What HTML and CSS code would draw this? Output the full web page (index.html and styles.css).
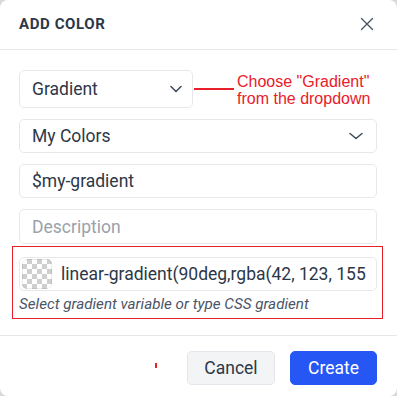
FILE: index.html
```html
<!DOCTYPE html>
<html>
<head>
<meta charset="utf-8">
<link rel="stylesheet" href="styles.css">
</head>
<body>
<div class="dialog">
  <div class="header">
    <div class="title">ADD COLOR</div>
    <svg class="close" width="14" height="14" viewBox="0 0 14 14"><path d="M1.5 1.5 L12.5 12.5 M12.5 1.5 L1.5 12.5" stroke="#4a5568" stroke-width="1.4" fill="none" stroke-linecap="round"/></svg>
  </div>
  <div class="body">
    <div class="row-first">
      <div class="select small">
        <span>Gradient</span>
        <svg class="chev" width="12" height="8" viewBox="0 0 12 8"><path d="M1 1.5 L6 6.5 L11 1.5" stroke="#3d4a5c" stroke-width="1.5" fill="none" stroke-linecap="round" stroke-linejoin="round"/></svg>
      </div>
      <div class="annot-line"></div>
      <div class="annot-text">Choose "Gradient"<br>from the dropdown</div>
    </div>
    <div class="select">
      <span>My Colors</span>
      <svg class="chev" width="14" height="8" viewBox="0 0 14 8"><path d="M1 1.5 L7 6.5 L13 1.5" stroke="#3d4a5c" stroke-width="1.5" fill="none" stroke-linecap="round" stroke-linejoin="round"/></svg>
    </div>
    <div class="input">$my-gradient</div>
    <div class="input placeholder">Description</div>
    <div class="grad-group">
      <div class="annot-box"></div>
      <div class="input grad">
        <span class="swatch"></span>
        <span class="grad-text">linear-gradient(90deg,rgba(42, 123, 155</span>
      </div>
      <div class="hint">Select gradient variable or type CSS gradient</div>
    </div>
  </div>
  <div class="footer">
    <span class="red-mark"></span>
    <button class="btn cancel">Cancel</button>
    <button class="btn create">Create</button>
  </div>
</div>
</body>
</html>
```

FILE: styles.css
```css
* { box-sizing: border-box; }
html, body { margin: 0; padding: 0; }
body {
  background: #d9d9d9;
  width: 397px;
  height: 396px;
  font-family: Roboto, "Noto Sans", sans-serif;
  color: #2d3748;
}
.dialog {
  width: 397px;
  height: 396px;
  background: #fff;
  border-radius: 8px;
  overflow: hidden;
  display: flex;
  flex-direction: column;
}
.header {
  height: 50px;
  border-bottom: 1px solid #e5e7eb;
  display: flex;
  align-items: center;
  justify-content: space-between;
  padding: 0 23px 2px 19px;
}
.title {
  font-size: 15px;
  font-weight: 700;
  letter-spacing: 0.6px;
  color: #2d3748;
}
.close { display: block; }
.body {
  padding: 20px 20px 0 19px;
  display: flex;
  flex-direction: column;
  gap: 11px;
  height: 285px;
}
.row-first {
  display: flex;
  align-items: center;
  position: relative;
}
.select, .input {
  height: 34px;
  border: 1px solid #e6e8eb;
  border-radius: 5px;
  display: flex;
  align-items: center;
  justify-content: space-between;
  padding: 0 13px 0 12px;
  font-size: 17.5px;
  color: #2d3748;
  background: #fff;
}
.select.small {
  width: 174px;
  height: 38px;
  padding-right: 10px;
}
.chev { display: block; }
.annot-line {
  width: 40px;
  height: 1.5px;
  background: #e8202a;
  margin-left: 1px;
}
.annot-text {
  font-family: "Liberation Sans", Arial, sans-serif;
  font-size: 16px;
  line-height: 17px;
  color: #e8202a;
  margin-left: 3px;
  margin-top: 1px;
}
.input.placeholder { color: #9aa1ab; height: 35px; }
.grad-group {
  position: relative;
  margin-top: 2px;
}
.annot-box {
  position: absolute;
  left: -7px;
  right: -6px;
  top: -11px;
  bottom: -6px;
  border: 1px solid #e8202a;
  pointer-events: none;
}
.input.grad {
  justify-content: flex-start;
  padding: 0 6px 0 2px;
  gap: 9px;
  overflow: hidden;
  white-space: nowrap;
}
.swatch {
  flex: none;
  width: 30px;
  height: 30px;
  border-radius: 5px;
  box-shadow: inset 0 0 0 1px rgba(0,0,0,0.08);
  background-color: #fff;
  background-image:
    linear-gradient(45deg, #cfcfcf 25%, transparent 25%, transparent 75%, #cfcfcf 75%),
    linear-gradient(45deg, #cfcfcf 25%, transparent 25%, transparent 75%, #cfcfcf 75%);
  background-size: 10px 10px;
  background-position: 0 0, 5px 5px;
}
.grad-text { overflow: hidden; }
.hint {
  font-style: italic;
  font-size: 15.2px;
  color: #4a5568;
  margin-top: 4px;
}
.footer {
  flex: 1;
  border-top: 1px solid #e5e7eb;
  display: flex;
  justify-content: flex-end;
  align-items: flex-start;
  padding: 15px 20px 0 0;
  gap: 15px;
  position: relative;
}
.red-mark {
  position: absolute;
  left: 155px;
  top: 27px;
  width: 2px;
  height: 5px;
  background: #e8202a;
}
.btn {
  font-family: Roboto, "Noto Sans", sans-serif;
  font-size: 17.5px;
  height: 34px;
  border-radius: 5px;
  padding: 0;
  display: flex;
  align-items: center;
  justify-content: center;
}
.cancel {
  width: 88px;
  background: #f3f4f5;
  border: 1px solid #e3e6ea;
  color: #2d3748;
}
.create {
  width: 87px;
  background: #2657f5;
  border: 1px solid #2657f5;
  color: #fff;
}
```
